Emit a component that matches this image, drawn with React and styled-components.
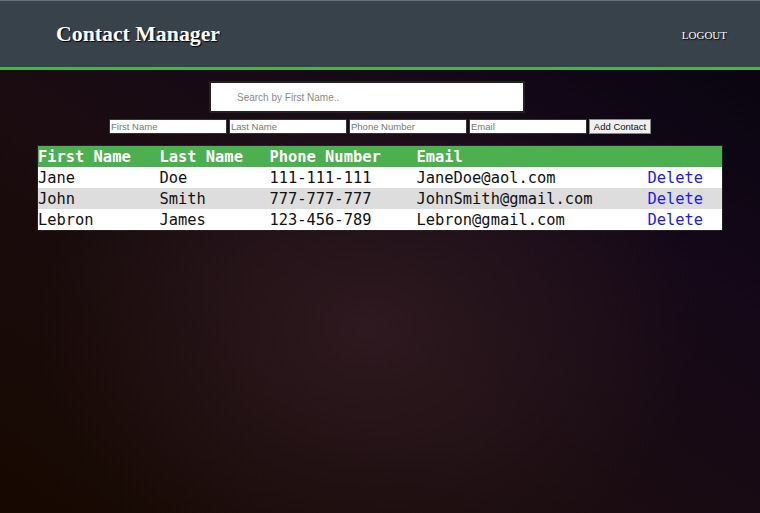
import React from "react";
import styled, { createGlobalStyle } from "styled-components";

const Global = createGlobalStyle`
  html, body { margin: 0; padding: 0; }
  body {
    min-height: 513px;
    background-color: #120810;
    background-image:
      radial-gradient(ellipse 330px 260px at 370px 330px, rgba(50, 28, 34, 0.8), rgba(40, 22, 26, 0) 100%),
      linear-gradient(215deg, #06040f 0%, #150818 30%, #1a0c10 60%, #170900 100%);
    background-repeat: no-repeat;
    font-family: "Liberation Serif", serif;
  }
`;

const Page = styled.div`
  min-height: 513px;
  display: flex;
  flex-direction: column;
`;

const Header = styled.header`
  height: 66px;
  background: #37424a;
  border-top: 1px solid #6b7276;
  border-bottom: 3px solid #4caf50;
  display: flex;
  align-items: center;
  justify-content: space-between;
  padding: 0 33px 0 56px;
`;

const Title = styled.h1`
  margin: 0;
  font-family: "Liberation Serif", serif;
  font-weight: bold;
  font-size: 21.8px;
  color: #fff;
  text-shadow: 1px 1px 1px #000;
`;

const Logout = styled.a`
  font-family: "Liberation Serif", serif;
  font-size: 11px;
  color: #fff;
  text-shadow: 1px 1px 1px #000;
  text-decoration: none;
  position: relative;
  top: 1px;
`;

const Main = styled.main`
  display: flex;
  flex-direction: column;
  align-items: center;
  padding-top: 11px;
`;

const Search = styled.input`
  box-sizing: border-box;
  width: 316px;
  height: 32px;
  margin-right: 26px;
  border: 2px solid #222;
  background: #fff;
  padding: 0 0 0 26px;
  font-family: "Liberation Sans", Arial, sans-serif;
  font-size: 10px;
  &::placeholder { color: #8a8a8a; }
  outline: none;
`;

const FormRow = styled.form`
  display: flex;
  gap: 2px;
  margin-top: 6px;
  align-items: center;
`;

const Field = styled.input`
  box-sizing: border-box;
  width: 118px;
  height: 15px;
  border: 1px solid #333;
  background: #fff;
  padding: 0 1px;
  font-family: "Liberation Sans", Arial, sans-serif;
  font-size: 9.5px;
  &::placeholder { color: #777; }
  outline: none;
`;

const AddButton = styled.button`
  box-sizing: border-box;
  height: 15px;
  width: 62px;
  padding: 0;
  border: 1px solid #888;
  background: #efefef;
  font-family: "Liberation Sans", Arial, sans-serif;
  font-size: 9.5px;
  color: #111;
`;

const Table = styled.table`
  margin-top: 11px;
  width: 686px;
  border-collapse: collapse;
  border: 1px solid #222;
  font-family: "DejaVu Sans Mono", monospace;
  font-size: 15.4px;
  table-layout: fixed;
`;

const HeadCell = styled.th`
  box-sizing: border-box;
  background: #4caf50;
  color: #fff;
  text-align: left;
  font-weight: bold;
  height: 21px;
  padding: 1px 0 0;
  line-height: 20px;
`;

const Row = styled.tr`
  background: ${(p) => (p.$alt ? "#dddddd" : "#ffffff")};
`;

const Cell = styled.td`
  box-sizing: border-box;
  height: 21px;
  padding: 2px 0 0;
  line-height: 19px;
  color: #111;
  white-space: nowrap;
`;

const DeleteLink = styled.a`
  color: #1a1aee;
  cursor: pointer;
`;

const contacts = [
  ["Jane", "Doe", "111-111-111", "JaneDoe@aol.com"],
  ["John", "Smith", "777-777-777", "JohnSmith@gmail.com"],
  ["Lebron", "James", "123-456-789", "Lebron@gmail.com"],
];

export default function App() {
  return (
    <Page>
      <Global />
      <Header>
        <Title>Contact Manager</Title>
        <Logout>LOGOUT</Logout>
      </Header>
      <Main>
        <Search placeholder="Search by First Name.." />
        <FormRow onSubmit={(e) => e.preventDefault()}>
          <Field placeholder="First Name" />
          <Field placeholder="Last Name" />
          <Field placeholder="Phone Number" />
          <Field placeholder="Email" />
          <AddButton type="submit">Add Contact</AddButton>
        </FormRow>
        <Table>
          <colgroup>
            <col style={{ width: 122 }} />
            <col style={{ width: 110 }} />
            <col style={{ width: 147 }} />
            <col style={{ width: 231 }} />
            <col />
          </colgroup>
          <thead>
            <tr>
              <HeadCell>First Name</HeadCell>
              <HeadCell>Last Name</HeadCell>
              <HeadCell>Phone Number</HeadCell>
              <HeadCell>Email</HeadCell>
              <HeadCell />
            </tr>
          </thead>
          <tbody>
            {contacts.map((c, i) => (
              <Row key={c[3]} $alt={i === 1}>
                <Cell>{c[0]}</Cell>
                <Cell>{c[1]}</Cell>
                <Cell>{c[2]}</Cell>
                <Cell>{c[3]}</Cell>
                <Cell>
                  <DeleteLink>Delete</DeleteLink>
                </Cell>
              </Row>
            ))}
          </tbody>
        </Table>
      </Main>
    </Page>
  );
}
